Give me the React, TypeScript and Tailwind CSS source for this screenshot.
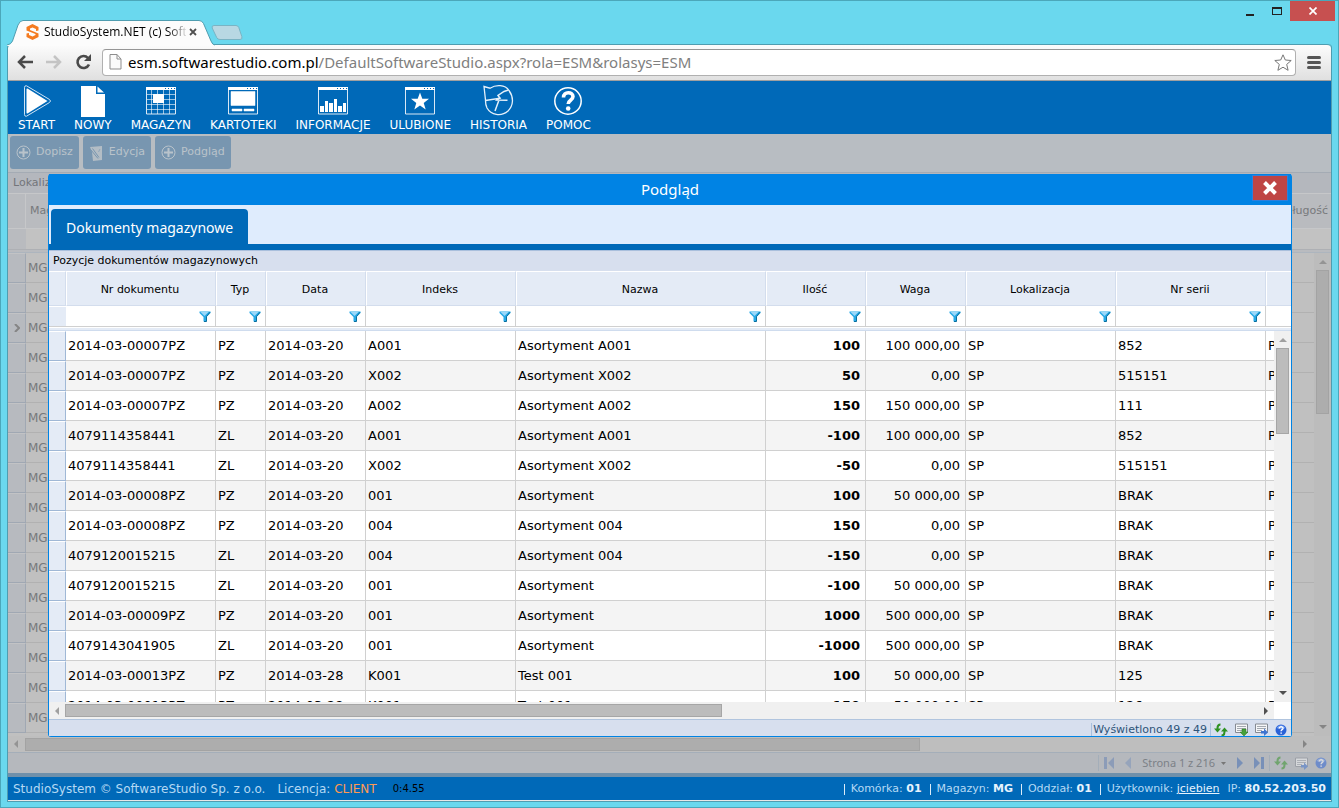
import type { ReactNode } from 'react'

type Column = { label: string; width: string; align?: 'right'; bold?: boolean }

const columns: Column[] = [
  { label: 'Nr dokumentu', width: 'w-[150px]' },
  { label: 'Typ', width: 'w-[50px]' },
  { label: 'Data', width: 'w-[100px]' },
  { label: 'Indeks', width: 'w-[150px]' },
  { label: 'Nazwa', width: 'w-[250px]' },
  { label: 'Ilość', width: 'w-[100px]', align: 'right', bold: true },
  { label: 'Waga', width: 'w-[100px]', align: 'right' },
  { label: 'Lokalizacja', width: 'w-[150px]' },
  { label: 'Nr serii', width: 'w-[150px]' },
]

const rows = [
  ['2014-03-00007PZ', 'PZ', '2014-03-20', 'A001', 'Asortyment A001', '100', '100 000,00', 'SP', '852'],
  ['2014-03-00007PZ', 'PZ', '2014-03-20', 'X002', 'Asortyment X002', '50', '0,00', 'SP', '515151'],
  ['2014-03-00007PZ', 'PZ', '2014-03-20', 'A002', 'Asortyment A002', '150', '150 000,00', 'SP', '111'],
  ['4079114358441', 'ZL', '2014-03-20', 'A001', 'Asortyment A001', '-100', '100 000,00', 'SP', '852'],
  ['4079114358441', 'ZL', '2014-03-20', 'X002', 'Asortyment X002', '-50', '0,00', 'SP', '515151'],
  ['2014-03-00008PZ', 'PZ', '2014-03-20', '001', 'Asortyment', '100', '50 000,00', 'SP', 'BRAK'],
  ['2014-03-00008PZ', 'PZ', '2014-03-20', '004', 'Asortyment 004', '150', '0,00', 'SP', 'BRAK'],
  ['4079120015215', 'ZL', '2014-03-20', '004', 'Asortyment 004', '-150', '0,00', 'SP', 'BRAK'],
  ['4079120015215', 'ZL', '2014-03-20', '001', 'Asortyment', '-100', '50 000,00', 'SP', 'BRAK'],
  ['2014-03-00009PZ', 'PZ', '2014-03-20', '001', 'Asortyment', '1000', '500 000,00', 'SP', 'BRAK'],
  ['4079143041905', 'ZL', '2014-03-20', '001', 'Asortyment', '-1000', '500 000,00', 'SP', 'BRAK'],
  ['2014-03-00013PZ', 'PZ', '2014-03-28', 'K001', 'Test 001', '100', '50 000,00', 'SP', '125'],
  ['2014-03-00013PZ', 'PZ', '2014-03-28', 'K001', 'Test 001', '150', '50 000,00', 'SP', '126'],
]

/* ---------- icons ---------- */

function WindowFrame({ children }: { children: ReactNode }) {
  return (
    <svg width="32" height="32" viewBox="0 0 32 32" fill="none" stroke="#fff">
      <path d="M1.500 3v26h29V3" opacity=".85" />
      <path d="M1 3.500h19" strokeWidth="3" />
      <path d="M21 3.500h2M24 3.500h2M27 3.500h2" strokeWidth="1" />
      <path d="M20 2.500h11M20 4.500h11" />
      {children}
    </svg>
  )
}

const menu: { label: string; icon: ReactNode }[] = [
  {
    label: 'START',
    icon: (
      <svg width="32" height="32" viewBox="0 0 32 32">
        <path d="M5.500.800 28.500 14.500q2 1.500 0 3L5.500 31.200q-1.800.500-2-1.500V2.300Q3.700.300 5.500.800Z" fill="none" stroke="#cfe3f4" />
        <path d="M6.500 3.500 26.500 16 6.500 28.500Q5.500 28.800 5.500 27.500v-23Q5.500 3.200 6.500 3.500Z" fill="#fff" />
      </svg>
    ),
  },
  {
    label: 'NOWY',
    icon: (
      <svg width="32" height="32" viewBox="0 0 32 32" fill="#fff">
        <path d="M4 1h15v8h9v23H4Z" />
        <path d="m20.500 1.500 6.500 6h-6.500Z" />
      </svg>
    ),
  },
  {
    label: 'MAGAZYN',
    icon: (
      <WindowFrame>
        <path d="M6.500 5v24M12.500 5v24M18.500 5v24M24.500 5v24M2 9.500h28M2 14.500h28M2 19.500h28M2 24.500h28" opacity=".6" />
        <path d="M8 9h11v9H8Z" fill="#fff" stroke="none" />
      </WindowFrame>
    ),
  },
  {
    label: 'KARTOTEKI',
    icon: (
      <WindowFrame>
        <path d="M4 6.500h24v14H4ZM5 24h10v2H5ZM17 24h10v2H17Z" fill="#fff" stroke="#fff" strokeWidth=".500" />
      </WindowFrame>
    ),
  },
  {
    label: 'INFORMACJE',
    icon: (
      <WindowFrame>
        <path d="M3 21h4v6H3ZM8 16h3v11H8ZM12 18h4v9h-4ZM17 14h3v13h-3ZM21 21h4v6h-4ZM26 18h3v9h-3Z" fill="#fff" stroke="none" />
      </WindowFrame>
    ),
  },
  {
    label: 'ULUBIONE',
    icon: (
      <WindowFrame>
        <path d="m16 7.500 2.300 6.300h6.700l-5.300 4.100 2 6.600L16 20.600l-5.700 3.900 2-6.600L7 13.800h6.700Z" fill="#fff" stroke="none" />
      </WindowFrame>
    ),
  },
  {
    label: 'HISTORIA',
    icon: (
      <svg width="32" height="32" viewBox="0 0 32 32" fill="none" stroke="#e4f0fa" strokeWidth="1.300">
        <path d="M1 1.500 7 3.200C13-.500 22-.500 26 5.500c5 7 4.500 15-1 20.500-7 6-17 4-21-3-1.200-2.500-1.600-5-1.500-8L1 1.500Z" />
        <path d="m2.500 15.500 14.500-2.300-2-2.700L21 6.500l4.500-1.500M17.500 12.500 14 15l10.500.200M16 15l-4 11" strokeWidth="1.500" />
      </svg>
    ),
  },
  {
    label: 'POMOC',
    icon: (
      <svg width="32" height="32" viewBox="0 0 32 32" fill="none" stroke="#fff">
        <circle cx="16" cy="16" r="13.200" strokeWidth="1.500" />
        <path d="M11.500 12.500c0-6.500 9.500-6 9.500-1 0 4-4.800 3.500-4.800 7.500" strokeWidth="3.600" />
        <circle cx="16.200" cy="23.500" r="2.300" fill="#fff" stroke="none" />
      </svg>
    ),
  },
]

function PlusIcon() {
  return (
    <svg width="15" height="15" viewBox="0 0 15 15" fill="none" stroke="#b9c3cb">
      <circle cx="7.500" cy="7.500" r="6.500" />
      <path d="M7.500 3v9M3 7.500h9" strokeWidth="2" />
    </svg>
  )
}

function EditIcon() {
  return (
    <svg width="15" height="16" viewBox="0 0 15 16">
      <path d="m1 2 12-1v14l-9 1-1-9Z" fill="#b3bdc5" />
      <path d="m3.500 3.500 6.500 9M2 5l7 8.500" stroke="#7896b0" fill="none" />
      <path d="m11 4-1.500 3" stroke="#8fa6ba" fill="none" />
    </svg>
  )
}

function FunnelIcon() {
  return (
    <svg width="12" height="11" viewBox="0 0 12 11">
      <path d="M.500.500h11v1.500L7.500 6v4.500h-3V6L.500 2Z" fill="#27a9e6" />
      <path d="M1.500 1h8L5.500 5Z" fill="#9bd8fa" />
      <path d="M11 1.200 7.500 5.500V10.500H5" fill="none" stroke="#0b6f9c" />
    </svg>
  )
}

function RefreshIcon() {
  return (
    <svg width="14" height="14" viewBox="0 0 14 14">
      <path d="M6.500 1.500Q3.500 1.500 3.500 5v3" fill="none" stroke="#2f9222" strokeWidth="2" />
      <path d="M0 5.500h7L3.500 9.500Z" fill="#2f9222" />
      <path d="M7.500 12.500q3 0 3-3.500V6" fill="none" stroke="#2f9222" strokeWidth="2" />
      <path d="M7 8.500h7l-3.500-4Z" fill="#2f9222" />
    </svg>
  )
}

function ExportIcon({ down = false }: { down?: boolean }) {
  return (
    <svg width="13" height="13" viewBox="0 0 13 13">
      <path d="M.500 1h12v8.500H.500Z" fill="#f5f6f8" stroke="#858a92" />
      <path d="M2 3.500h9M2 5.500h9M2 7.500h5" stroke="#a4a9b0" />
      {down ? (
        <path d="M7 6h4v3h2l-4 4-4-4h2Z" fill="#47a03a" stroke="#2b7a21" strokeWidth=".500" />
      ) : (
        <path d="M6 8h3V5.500l4 4-4 3.500v-2.500H6Z" fill="#3f74d0" />
      )}
    </svg>
  )
}

function HelpIcon() {
  return (
    <svg width="12" height="12" viewBox="0 0 12 12">
      <circle cx="6" cy="6" r="5.500" fill="#2a62d8" />
      <path d="M1.500 4a5 5 0 0 1 9 0q-4 2-9 0Z" fill="#6f9bf0" />
      <path d="M4.200 4.600c0-2.600 4-2.300 3.800-.200C7.800 5.800 6.100 5.600 6.100 7.200" fill="none" stroke="#fff" strokeWidth="1.400" />
      <path d="M5.400 8.400h1.500v1.400H5.400Z" fill="#fff" />
    </svg>
  )
}

function Arrow({ dir, color = '#505050' }: { dir: 'up' | 'down' | 'left' | 'right'; color?: string }) {
  const paths = {
    up: 'M0 6 4 2l4 4Z',
    down: 'M0 2l4 4 4-4Z',
    left: 'M6 0 2 4l4 4Z',
    right: 'M2 0l4 4-4 4Z',
  }
  return (
    <svg width="8" height="8" viewBox="0 0 8 8">
      <path d={paths[dir]} fill={color} />
    </svg>
  )
}

/* ---------- browser chrome ---------- */

function TabStrip() {
  return (
    <div className="flex h-[43px] items-start justify-between">
      <div className="flex pt-[19px] pl-[6px]">
        <div className="relative flex h-6 w-[208px] items-center pl-[19px]">
          <svg className="absolute top-0 left-0" width="208" height="26" viewBox="0 0 208 26">
            <path d="M0 25q4-.500 5.500-4L11 5Q13 .500 16 .500h176q3 0 4.500 3L204 21q1.500 4 4 4v1H0Z" fill="#fcfcfc" />
            <path d="M0 25q4-.500 5.500-4L11 5Q13 .500 16 .500h176q3 0 4.500 3L204 21q1.500 4 4 4" fill="none" stroke="#4f9db0" />
          </svg>
          <svg className="relative" width="13" height="16" viewBox="0 0 13 16">
            <path d="M6.500 0 12.500 3v3.500l-2.500.500V5L6.500 3.500 4 4.500V6l8.500 3.500V13l-6 3-6-3V9.500L3 9v2l3.500 1.500L9.500 11V10L.500 6.500V3Z" fill="#f47b20" />
          </svg>
          <span className="relative ml-[5px] w-[142px] overflow-hidden bg-gradient-to-r from-black from-85% to-[#dddddd] bg-clip-text font-['Open_Sans',sans-serif] text-xs whitespace-nowrap text-transparent">
            StudioSystem.NET (c) Soft
          </span>
          <button type="button" aria-label="Zamknij kartę" className="relative ml-[3px]">
            <svg width="8" height="8" viewBox="0 0 8 8" stroke="#505050" strokeWidth="1.800">
              <path d="m1 1 6 6M7 1 1 7" />
            </svg>
          </button>
        </div>
        <button type="button" aria-label="Nowa karta" className="-ml-[4px] self-start pt-[4px]">
          <svg width="32" height="18" viewBox="0 0 32 18">
            <path d="M3 1.500h22q2 0 2.800 2l3 9q1 3-1.800 3H9q-2.500 0-3.300-2L1.200 4Q.500 1.500 3 1.500Z" fill="#b8d8e3" stroke="#79b4c4" />
          </svg>
        </button>
      </div>
      <div className="flex h-5 pr-[3px]">
        <button type="button" aria-label="Minimalizuj" className="flex w-[26px] items-end justify-center pb-[5px]">
          <span className="h-[2px] w-2 bg-[#222222]" />
        </button>
        <button type="button" aria-label="Maksymalizuj" className="flex w-[27px] items-center justify-center">
          <span className="h-2 w-[10px] border border-t-2 border-[#222222]" />
        </button>
        <button type="button" aria-label="Zamknij okno" className="flex w-[45px] items-center justify-center bg-[#c75050]">
          <svg width="8" height="8" viewBox="0 0 8 8" stroke="#fff" strokeWidth="1.700">
            <path d="m.500.500 7 7M7.500.500l-7 7" />
          </svg>
        </button>
      </div>
    </div>
  )
}

function AddressBar() {
  return (
    <div className="flex h-[37px] items-center rounded-t border-t border-b border-t-[#4f9db0] border-b-[#a0a0a0] bg-gradient-to-b from-[#fcfcfc] to-[#e0e0e0] pr-[10px] pb-[1px] pl-[9px]">
      <button type="button" aria-label="Wstecz">
        <svg width="16" height="14" viewBox="0 0 16 14" fill="none" stroke="#4a4a4a" strokeWidth="2.500">
          <path d="M8 1 2 7l6 6M2 7h14" />
        </svg>
      </button>
      <button type="button" aria-label="Dalej" className="ml-[13px]">
        <svg width="16" height="14" viewBox="0 0 16 14" fill="none" stroke="#c4c4c4" strokeWidth="2.500">
          <path d="m8 1 6 6-6 6M14 7H0" />
        </svg>
      </button>
      <button type="button" aria-label="Odśwież" className="ml-[13px]">
        <svg width="17" height="16" viewBox="0 0 17 16">
          <path d="M13 4A6 6 0 1 0 14 10.500" fill="none" stroke="#4a4a4a" strokeWidth="2.600" />
          <path d="M16 0v7H9Z" fill="#4a4a4a" />
        </svg>
      </button>
      <div className="ml-[10px] flex h-[27px] flex-1 items-center rounded-sm border border-[#b0b0b0] border-t-[#969696] bg-white px-[6px]">
        <svg width="13" height="16" viewBox="0 0 13 16" fill="#fbfbfb" stroke="#8d8d8d">
          <path d="M1 .500h7l4 4.500v10H1ZM8 .500V5h4" />
        </svg>
        <div className="ml-[6px] flex-1 font-['Noto_Sans',sans-serif] text-[15px] leading-5 text-[#808080]">
          <span className="text-black">esm.softwarestudio.com.pl</span>/DefaultSoftwareStudio.aspx?rola=ESM&amp;rolasys=ESM
        </div>
        <button type="button" aria-label="Dodaj zakładkę" className="-mr-[3px]">
          <svg width="18" height="17" viewBox="0 0 18 17" fill="#fff" stroke="#777">
            <path d="M9 .800 11.300 6l5.900.500-4.500 3.900 1.400 5.900L9 13.200l-5.100 3.100 1.400-5.900L.800 6.500 6.700 6Z" strokeLinejoin="round" />
          </svg>
        </button>
      </div>
      <button type="button" aria-label="Menu" className="ml-[11px] flex w-[14px] flex-col gap-[2px]">
        <span className="h-[3px] rounded-sm bg-[#555555]" />
        <span className="h-[3px] rounded-sm bg-[#555555]" />
        <span className="h-[3px] rounded-sm bg-[#555555]" />
      </button>
    </div>
  )
}

/* ---------- application ---------- */

function MainMenu() {
  return (
    <nav className="flex h-[53px] shrink-0 gap-[19px] bg-[#0069b8] px-[10px] pt-1">
      {menu.map((item) => (
        <button key={item.label} type="button" className="flex flex-col items-center text-xs leading-4 text-white">
          {item.icon}
          {item.label}
        </button>
      ))}
    </nav>
  )
}

function ActionButton({ icon, label }: { icon: ReactNode; label: string }) {
  return (
    <button type="button" className="flex h-[33px] items-center gap-[5px] rounded-[3px] bg-[#7896b0] px-[6px] text-[11px] text-[#bac3ca]">
      {icon}
      {label}
    </button>
  )
}

function StockCols() {
  return (
    <colgroup>
      <col className="w-[18px]" />
      <col />
      <col className="w-[70px]" />
    </colgroup>
  )
}

function StockGrid() {
  return (
    <div className="flex min-h-0 flex-1 flex-col border-t border-[#a4abb4] bg-[#c0c0c0]">
      <div className="h-5 shrink-0 bg-[#b4b7bd] pl-[5px] text-[11px] leading-5 text-[#73757a]">Lokalizacje</div>
      <table className="w-full shrink-0 table-fixed border-separate border-spacing-0 text-[11px] text-[#77797c]">
        <StockCols />
        <thead>
          <tr className="h-9 bg-[#b9bbbf]">
            <th className="border-t border-r border-b border-[#c6c7c9]" />
            <th className="border-t border-b border-[#c6c7c9] pl-1 text-left font-normal">Magazyn</th>
            <th className="border-t border-b border-[#c6c7c9] pr-[3px] text-right font-normal">Długość</th>
          </tr>
          <tr className="h-5">
            <td className="bg-[#b9bbbf]" />
            <td colSpan={2} className="bg-[#c2c2c2]" />
          </tr>
        </thead>
      </table>
      <div className="h-1 shrink-0 border-t border-b border-t-[#aeb0b4] border-b-[#adb5be] bg-[#b9bbbf]" />
      <div className="flex min-h-0 flex-1">
        <div className="min-w-0 flex-1 overflow-hidden">
          <table className="w-full table-fixed border-separate border-spacing-0 text-xs text-[#77797c]">
            <StockCols />
            <tbody>
              {Array.from({ length: 16 }, (_, i) => (
                <tr key={i} className="h-[30px]">
                  <td className="border-t border-r border-b border-t-[#c2c3c5] border-r-[#a0a8b3] border-b-[#a0a8b3] bg-[#b7babf] p-0">
                    {i === 2 && (
                      <svg className="mx-auto" width="6" height="8" viewBox="0 0 6 8" fill="none" stroke="#858585" strokeWidth="2">
                        <path d="m1 0 4 4-4 4" />
                      </svg>
                    )}
                  </td>
                  <td className="border-b border-[#b1b1b1] p-0 pl-[2px]">MG</td>
                  <td className="border-b border-[#b1b1b1] p-0" />
                </tr>
              ))}
            </tbody>
          </table>
        </div>
        <div className="flex w-[17px] shrink-0 flex-col items-center bg-[#bcbcbc] pt-[5px] pb-[5px]">
          <Arrow dir="up" color="#949494" />
          <div className="mt-1 h-[144px] w-[13px] border border-[#a3a3a3] bg-[#adadad]" />
          <div className="flex-1" />
          <Arrow dir="down" color="#858585" />
        </div>
      </div>
      <div className="flex h-4 shrink-0 items-center justify-between bg-[#bebebe] pr-[22px] pl-1">
        <Arrow dir="left" color="#949494" />
        <div className="ml-[5px] h-[13px] w-[69%] border border-[#a3a3a3] bg-[#adadad]" />
        <div className="flex-1" />
        <Arrow dir="right" color="#858585" />
      </div>
      <div className="flex h-[21px] shrink-0 items-center justify-end border-t border-[#a4aeb9] bg-[#b5b8bd] pr-1 font-['Noto_Sans',sans-serif] text-[11px] text-[#7c8187]">
        <div className="flex h-4 items-center gap-[10px] border-r border-l border-[#a4aeb9] px-[5px]">
          <svg width="10" height="12" viewBox="0 0 10 12" fill="#8c9cb8">
            <path d="M0 0h3v12H0ZM10 0v12L4 6Z" />
          </svg>
          <svg width="8" height="12" viewBox="0 0 8 12" fill="#96a4bb">
            <path d="M7 0v12L1 6Z" />
          </svg>
          <span className="flex items-center gap-[6px]">
            Strona 1 z 216
            <svg width="5" height="3" viewBox="0 0 5 3" fill="#777">
              <path d="M0 0h5L2.500 3Z" />
            </svg>
          </span>
          <svg width="8" height="12" viewBox="0 0 8 12" fill="#7890b8">
            <path d="M1 0v12l6-6Z" />
          </svg>
          <svg width="10" height="12" viewBox="0 0 10 12" fill="#7890b8">
            <path d="M7 0h3v12H7ZM0 0v12l6-6Z" />
          </svg>
        </div>
        <div className="flex items-center gap-[7px] pl-[4px] opacity-50">
          <RefreshIcon />
          <ExportIcon />
          <HelpIcon />
        </div>
      </div>
    </div>
  )
}

function Cols() {
  return (
    <colgroup>
      <col className="w-[17px]" />
      {columns.map((c) => (
        <col key={c.label} className={c.width} />
      ))}
      <col className="w-[150px]" />
    </colgroup>
  )
}

function DocumentsGrid() {
  return (
    <div className="flex min-h-0 flex-1 flex-col overflow-hidden">
      <div className="h-[21px] shrink-0 border-t border-[#a9bfdc] bg-[#d7dfee] pl-1 text-[11px] leading-[19px]">
        Pozycje dokumentów magazynowych
      </div>
      <div className="shrink-0 overflow-hidden">
        <table className="w-[1367px] table-fixed border-separate border-spacing-0 text-[11px]">
          <Cols />
          <thead>
            <tr className="h-[35px] bg-[#e4ebf6]">
              <th className="border-t border-r border-b border-t-white border-r-[#d3dded] border-b-[#d3dded]" />
              {columns.map((c) => (
                <th
                  key={c.label}
                  className="border border-t-white border-r-[#d3dded] border-b-[#d3dded] border-l-white p-0 pt-[3px] pr-[2px] font-normal"
                >
                  {c.label}
                </th>
              ))}
              <th className="border border-t-white border-r-[#d3dded] border-b-[#d3dded] border-l-white" />
            </tr>
            <tr className="h-[21px]">
              <td className="border-t border-b border-t-white border-b-[#d0d0d0] bg-[#e4ebf6] p-0" />
              {columns.map((c) => (
                <td key={c.label} className="border-r border-b border-[#d0d0d0] p-0">
                  <div className="flex h-5 items-center pr-1">
                    <input aria-label={`Filtr: ${c.label}`} className="h-4 min-w-0 flex-1 bg-transparent px-[2px] outline-none" />
                    <button type="button" aria-label={`Filtruj ${c.label}`}>
                      <FunnelIcon />
                    </button>
                  </div>
                </td>
              ))}
              <td className="border-b border-[#d0d0d0]" />
            </tr>
          </thead>
        </table>
        <div className="h-1 border-t border-b border-t-white border-b-[#cfdcee] bg-[#e4ebf6]" />
      </div>
      <div className="flex min-h-0 flex-1">
        <div className="min-w-0 flex-1 overflow-hidden">
          <table className="w-[1367px] table-fixed border-separate border-spacing-0 text-[13px]">
            <Cols />
            <tbody>
              {rows.map((row, i) => (
                <tr key={i} className="h-[30px] odd:bg-white even:bg-[#f4f4f4]">
                  <td className="border-t border-r border-b border-t-white border-r-[#a0b8d6] border-b-[#a0b8d6] bg-[#e4ebf6] p-0" />
                  {row.map((value, j) => (
                    <td
                      key={j}
                      className={`border-r border-b border-[#d0d0d0] py-0 pl-[2px] whitespace-nowrap ${
                        columns[j].align === 'right' ? 'pr-[5px] text-right' : 'pr-0'
                      } ${columns[j].bold ? 'font-bold' : ''}`}
                    >
                      {value}
                    </td>
                  ))}
                  <td className="border-r border-b border-[#d0d0d0] py-0 pl-[2px]">PZ</td>
                </tr>
              ))}
            </tbody>
          </table>
        </div>
        <div className="flex w-[17px] shrink-0 flex-col items-center bg-[#f0f0f0] pt-[5px] pb-[5px]">
          <Arrow dir="up" color="#a0a0a0" />
          <div className="mt-1 h-[86px] w-[13px] border border-[#a6a6a6] bg-[#bcbcbc]" />
          <div className="flex-1" />
          <Arrow dir="down" />
        </div>
      </div>
      <div className="flex h-[17px] shrink-0">
        <div className="flex flex-1 items-center bg-[#f0f0f0] px-1">
          <Arrow dir="left" color="#a0a0a0" />
          <div className="ml-1 h-[13px] w-[54%] border border-[#a6a6a6] bg-[#bcbcbc]" />
          <div className="flex-1" />
          <Arrow dir="right" />
        </div>
        <div className="w-[17px] bg-white" />
      </div>
      <div className="flex h-[17px] shrink-0 items-center justify-end border-t border-[#b0c4de] bg-[#d7dfee] pt-[3px] pr-1 text-[#2d5379]">
        <span className="border-r border-l border-[#a9bfdc] px-[1px] pr-[3px] text-[11px] leading-[14px]">Wyświetlono 49 z 49</span>
        <div className="flex items-center gap-[7px] pl-[3px]">
          <RefreshIcon />
          <ExportIcon down />
          <ExportIcon />
          <HelpIcon />
        </div>
      </div>
    </div>
  )
}

function PreviewDialog() {
  return (
    <section
      role="dialog"
      aria-label="Podgląd"
      className="absolute top-[40px] right-[39px] bottom-[36px] left-[40px] flex flex-col rounded-[3px] border-x border-b border-[#0083e4] bg-white"
    >
      <header className="relative flex h-[31px] shrink-0 items-center justify-center bg-[#0083e4]">
        <h1 className="font-['Noto_Sans',sans-serif] text-[15px] text-white">Podgląd</h1>
        <button
          type="button"
          aria-label="Zamknij"
          className="absolute top-[1px] right-[3px] flex h-[26px] w-9 items-center justify-center border border-[#2d7fdc] bg-[#bf4544]"
        >
          <svg width="14" height="14" viewBox="0 0 14 14" stroke="#fff" strokeWidth="4">
            <path d="m1.500 1.500 11 11M12.500 1.500l-11 11" />
          </svg>
        </button>
      </header>
      <div role="tablist" className="flex h-[45px] shrink-0 items-end border-b-[6px] border-[#0069b8] bg-[#dfecfd] pl-[2px]">
        <button
          type="button"
          role="tab"
          aria-selected="true"
          className="h-[35px] rounded-t bg-[#0069b8] px-[15px] pt-[2px] font-['Noto_Sans',sans-serif] text-sm text-white"
        >
          Dokumenty magazynowe
        </button>
      </div>
      <DocumentsGrid />
    </section>
  )
}

function StatusItem({ label, value }: { label: string; value: ReactNode }) {
  return (
    <span className="flex items-center gap-[6px]">
      <span className="h-[11px] w-px bg-[#dcecf8]" />
      <span>
        {label}: <b className="font-bold text-[#e6f3fd]">{value}</b>
      </span>
    </span>
  )
}

function StatusBar() {
  return (
    <footer className="flex h-[27px] shrink-0 items-center justify-between border-t-4 border-[#7090aa] bg-[#0069b8] px-[5px] text-[11px] text-[#b5d9f4]">
      <div className="flex items-center gap-3 text-xs">
        <span>StudioSystem © SoftwareStudio Sp. z o.o.</span>
        <span>
          Licencja: <span className="text-[#ff9a52]">CLIENT</span>
        </span>
        <span className="pl-1 text-[10px] text-black">0:4.55</span>
      </div>
      <div className="flex items-center gap-2 pt-[2px]">
        <StatusItem label="Komórka" value="01" />
        <StatusItem label="Magazyn" value="MG" />
        <StatusItem label="Oddział" value="01" />
        <StatusItem
          label="Użytkownik"
          value={
            <a href="#uzytkownik" className="font-normal underline">
              jciebien
            </a>
          }
        />
        <span>
          IP: <b className="font-bold text-[#e6f3fd]">80.52.203.50</b>
        </span>
      </div>
    </footer>
  )
}

export default function App() {
  return (
    <div className="flex h-screen flex-col overflow-hidden border border-[#4ba7ba] bg-[#6ad8ee] font-['DejaVu_Sans',Verdana,sans-serif] text-black">
      <TabStrip />
      <div className="mx-[6px] mb-[5px] flex min-h-0 flex-1 flex-col rounded-t border-x border-b border-[#4f9db0]">
        <AddressBar />
        <MainMenu />
        <main className="relative flex min-h-0 flex-1 flex-col bg-[#b8bdc2]">
          <div className="flex h-[38px] shrink-0 gap-1 px-[2px] pt-[2px]">
            <ActionButton icon={<PlusIcon />} label="Dopisz" />
            <ActionButton icon={<EditIcon />} label="Edycja" />
            <ActionButton icon={<PlusIcon />} label="Podgląd" />
          </div>
          <StockGrid />
          <PreviewDialog />
        </main>
        <StatusBar />
        <div className="h-px shrink-0 bg-[#e8e8e8]" />
      </div>
    </div>
  )
}
